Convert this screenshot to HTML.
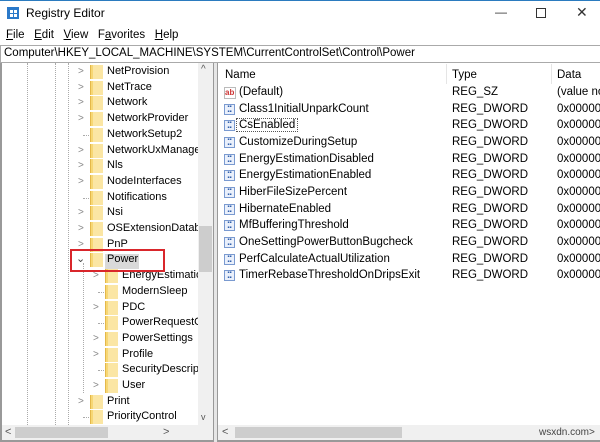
<!DOCTYPE html>
<html><head><style>
*{margin:0;padding:0;box-sizing:border-box}
body{width:600px;height:442px;background:#fff;font-family:"Liberation Sans",sans-serif;font-size:11px;color:#000;position:relative;overflow:hidden}
.a{position:absolute;white-space:nowrap}
.f{position:absolute;width:12px;height:14px;background:#f7d774;border-left:1px solid #e4b84a}
.f::after{content:"";position:absolute;left:2px;top:0;width:10px;height:14px;background:#fbe6a4}
.ch{position:absolute;color:#888;font-size:10px}
.dl{position:absolute;border-left:1px dotted #aaa;width:0}
.ic{position:absolute;width:11px;height:11px;border:1px solid #7a9ad0;background:#eaf0fb;font-size:6px;line-height:5px;color:#2a5aa8;text-align:center;font-weight:bold}
</style></head><body>
<div class="a" style="left:0;top:0;width:600px;height:1px;background:#2b7bbf"></div>
<div class="a" style="left:7px;top:7px;width:12px;height:12px;background:#2b79c9"></div>
<div class="a" style="left:10px;top:10px;width:3px;height:3px;background:#fff;box-shadow:4px 0 #fff,0 4px #fff,4px 4px #fff"></div>
<div class="a" style="left:26px;top:6px;font-size:12px">Registry Editor</div>
<div class="a" style="left:495px;top:5px;font-size:12px;color:#333">—</div>
<div class="a" style="left:536px;top:8px;width:10px;height:10px;border:1px solid #333"></div>
<div class="a" style="left:576px;top:4px;font-size:14px;color:#333">✕</div>
<div class="a" style="left:6px;top:29px;font-size:11.5px"><u>F</u>ile&nbsp;&nbsp;&nbsp;<u>E</u>dit&nbsp;&nbsp;&nbsp;<u>V</u>iew&nbsp;&nbsp;&nbsp;F<u>a</u>vorites&nbsp;&nbsp;&nbsp;<u>H</u>elp</div>
<div class="a" style="left:0;top:45px;width:600px;height:18px;border:1px solid #aaa;border-right:none"></div>
<div class="a" style="left:4px;top:47px;font-size:11.5px">Computer\HKEY_LOCAL_MACHINE\SYSTEM\CurrentControlSet\Control\Power</div>
<div class="a" style="left:0;top:63px;width:2px;height:379px;background:#999"></div>
<div class="a" style="left:0;top:440px;width:600px;height:2px;background:#999"></div>
<div class="a" style="left:213px;top:63px;width:5px;height:379px;background:#e6e6e6;border-left:1px solid #999;border-right:1px solid #999"></div>
<div class="dl" style="left:27px;top:63px;height:362px"></div>
<div class="dl" style="left:55px;top:63px;height:362px"></div>
<div class="dl" style="left:68px;top:63px;height:362px"></div>
<div class="dl" style="left:83px;top:263px;height:130px"></div>
<div class="a" style="left:198px;top:63px;width:15px;height:362px;background:#f0f0f0"></div>
<div class="a" style="left:199px;top:226px;width:13px;height:46px;background:#cdcdcd"></div>
<div class="a" style="left:201px;top:64px;font-size:10px;color:#555">^</div>
<div class="a" style="left:201px;top:412px;font-size:9px;color:#555">v</div>
<div class="a" style="left:2px;top:425px;width:211px;height:15px;background:#f0f0f0"></div>
<div class="a" style="left:15px;top:427px;width:93px;height:11px;background:#cdcdcd"></div>
<div class="a" style="left:5px;top:426px;color:#555">&lt;</div><div class="a" style="left:163px;top:426px;color:#555">&gt;</div>
<div class="a" style="left:218px;top:425px;width:382px;height:15px;background:#f0f0f0"></div>
<div class="a" style="left:235px;top:427px;width:167px;height:11px;background:#cdcdcd"></div>
<div class="a" style="left:222px;top:426px;color:#555">&lt;</div>
<div class="a" style="left:539px;top:427px;color:#444;font-size:10px">wsxdn.com&gt;</div>
<div class="a" style="left:105px;top:254px;width:34px;height:15px;background:#d9d9d9"></div>
<div id="tree"></div>
<div class="a" style="left:70px;top:249px;width:95px;height:23px;border:2px solid #d9262b"></div>
<div class="a" style="left:446px;top:64px;height:20px;border-left:1px solid #e5e5e5"></div>
<div class="a" style="left:551px;top:64px;height:20px;border-left:1px solid #e5e5e5"></div>
<div class="a" style="left:225px;top:69px;font-size:11.5px">Name</div>
<div class="a" style="left:452px;top:69px;font-size:11.5px">Type</div>
<div class="a" style="left:557px;top:69px;font-size:11.5px">Data</div>
<div id="vals"></div>
<script>
var t=[["NetProvision",1],["NetTrace",1],["Network",1],["NetworkProvider",1],["NetworkSetup2",0],["NetworkUxManager",1],["Nls",1],["NodeInterfaces",1],["Notifications",0],["Nsi",1],["OSExtensionDatabase",1],["PnP",1],["Power",2],["EnergyEstimation",1,1],["ModernSleep",0,1],["PDC",1,1],["PowerRequestOverride",0,1],["PowerSettings",1,1],["Profile",1,1],["SecurityDescriptors",0,1],["User",1,1],["Print",1],["PriorityControl",0]];
var h="";t.forEach(function(r,i){var y=72+i*15.7-7;var x=r[2]?15:0;
if(r[1]==1)h+='<div class="ch" style="left:'+(78+x)+'px;top:'+(y+1)+'px">&gt;</div>';
else if(r[1]==2)h+='<div class="ch" style="left:'+(76+x)+'px;top:'+(y-1)+'px;font-size:11px;color:#444">&#8964;</div>';
else h+='<div class="a" style="left:'+(83+x)+'px;top:'+(y+7)+'px;width:6px;border-top:1px dotted #aaa"></div>';
h+='<div class="f" style="left:'+(90+x)+'px;top:'+y+'px"></div>';
h+='<div class="a" style="left:'+(107+x)+'px;top:'+(y)+'px;width:'+(198-(107+x))+'px;overflow:hidden;font-size:11px">'+r[0]+'</div>';});
document.getElementById("tree").innerHTML=h;
var v=["(Default)","Class1InitialUnparkCount","CsEnabled","CustomizeDuringSetup","EnergyEstimationDisabled","EnergyEstimationEnabled","HiberFileSizePercent","HibernateEnabled","MfBufferingThreshold","OneSettingPowerButtonBugcheck","PerfCalculateActualUtilization","TimerRebaseThresholdOnDripsExit"];
h="";v.forEach(function(n,i){var y=93+i*16.65-7;
if(i==0)h+='<div class="a" style="left:224px;top:'+(y+1)+'px;width:12px;height:12px;border:1px solid #bbb;color:#c33;font-size:8px;line-height:9px;font-weight:bold">ab</div>';
else h+='<div class="ic" style="left:224px;top:'+(y+1)+'px">▪▪<br>▪▪</div>';
h+='<div class="a" style="left:239px;top:'+y+'px;font-size:11.5px;'+(i==2?'outline:1px dotted #555;padding:0 2px;left:237px':'')+'">'+n+'</div>';
h+='<div class="a" style="left:452px;top:'+y+'px;font-size:11.5px">'+(i?"REG_DWORD":"REG_SZ")+'</div>';
h+='<div class="a" style="left:557px;top:'+y+'px;font-size:11.5px;width:43px;overflow:hidden">'+(i?"0x0000000":"(value not")+'</div>';});
document.getElementById("vals").innerHTML=h;
</script>
</body></html>
